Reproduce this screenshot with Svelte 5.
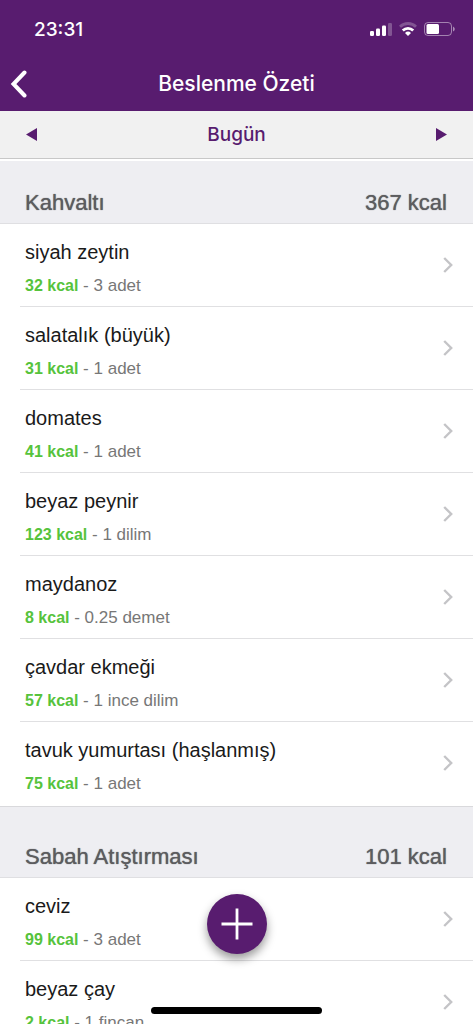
<script lang="ts">
  interface Food {
    name: string;
    kcal: number;
    amount: string;
  }

  interface Meal {
    title: string;
    total: number;
    foods: Food[];
  }

  const meals: Meal[] = [
    {
      title: 'Kahvaltı',
      total: 367,
      foods: [
        { name: 'siyah zeytin', kcal: 32, amount: '3 adet' },
        { name: 'salatalık (büyük)', kcal: 31, amount: '1 adet' },
        { name: 'domates', kcal: 41, amount: '1 adet' },
        { name: 'beyaz peynir', kcal: 123, amount: '1 dilim' },
        { name: 'maydanoz', kcal: 8, amount: '0.25 demet' },
        { name: 'çavdar ekmeği', kcal: 57, amount: '1 ince dilim' },
        { name: 'tavuk yumurtası (haşlanmış)', kcal: 75, amount: '1 adet' }
      ]
    },
    {
      title: 'Sabah Atıştırması',
      total: 101,
      foods: [
        { name: 'ceviz', kcal: 99, amount: '3 adet' },
        { name: 'beyaz çay', kcal: 2, amount: '1 fincan' }
      ]
    }
  ];
</script>

<div class="app">
  <header>
    <div class="status-bar">
      <time>23:31</time>
      <div class="status-icons">
        <svg width="22" height="14" viewBox="0 0 22 14" fill="#fff">
          <rect x="0" y="9" width="4" height="5" rx="1.2" />
          <rect x="6" y="6.5" width="4" height="7.5" rx="1.2" />
          <rect x="12" y="3.5" width="4" height="10.5" rx="1.2" />
          <rect x="18" y="1" width="4" height="13" rx="1.2" opacity="0.25" />
        </svg>
        <svg width="18" height="14" viewBox="0 0 18 14" fill="none" stroke="#fff" stroke-width="2.8">
          <path d="M1 4.8a11.4 11.4 0 0 1 16 0" opacity="0.25" />
          <path d="M3.8 8.6a7.4 7.4 0 0 1 10.4 0" />
          <path d="M9 14 6 11a4.3 4.3 0 0 1 6 0z" fill="#fff" stroke="none" />
        </svg>
        <svg width="31" height="14" viewBox="0 0 31 14">
          <rect x="0.5" y="0.5" width="27" height="13" rx="3.5" fill="none" stroke="#fff" opacity="0.45" />
          <rect x="2.5" y="2" width="12.5" height="10" rx="1.5" fill="#fff" />
          <path d="M29 4.5q1.8 1 1.8 2.5T29 9.5z" fill="#fff" opacity="0.5" />
        </svg>
      </div>
    </div>
    <div class="nav-bar">
      <button class="back" aria-label="Geri">
        <svg width="17" height="28" viewBox="0 0 17 28" fill="none" stroke="#fff" stroke-width="4" stroke-linecap="round">
          <path d="M14.5 2.5 3.5 14l11 11.5" />
        </svg>
      </button>
      <h1>Beslenme Özeti</h1>
    </div>
  </header>

  <div class="date-bar">
    <button aria-label="Önceki gün">
      <svg width="11" height="13" viewBox="0 0 11 13" fill="#581c6f"><path d="M11 0v13L0 6.5z" /></svg>
    </button>
    <span>Bugün</span>
    <button aria-label="Sonraki gün">
      <svg width="11" height="13" viewBox="0 0 11 13" fill="#581c6f"><path d="M0 0v13l11-6.5z" /></svg>
    </button>
  </div>

  <main>
    {#each meals as meal}
      <section>
        <div class="meal-header">
          <h2>{meal.title}</h2>
          <span>{meal.total} kcal</span>
        </div>
        <ul>
          {#each meal.foods as food}
            <li>
              <button class="food">
                <span class="food-text">
                  <span class="name">{food.name}</span>
                  <span class="detail"><b>{food.kcal} kcal</b> - {food.amount}</span>
                </span>
                <svg width="10" height="16" viewBox="0 0 10 16" fill="none" stroke="#c4c4c7" stroke-width="2.4">
                  <path d="M1.2 1 8.2 8l-7 7" />
                </svg>
              </button>
            </li>
          {/each}
        </ul>
      </section>
    {/each}
  </main>

  <button class="add" aria-label="Ekle">
    <svg width="32" height="32" viewBox="0 0 32 32" fill="none" stroke="#fff" stroke-width="2.8">
      <path d="M16 0.5v31M0.5 16h31" />
    </svg>
  </button>
  <div class="home-indicator"></div>
</div>

<style>
  :global(body) {
    margin: 0;
    background: #fff;
  }

  .app {
    display: flex;
    flex-direction: column;
    height: 100vh;
    overflow: hidden;
    font-family: 'Liberation Sans', Arial, sans-serif;
  }

  button {
    margin: 0;
    padding: 0;
    border: none;
    background: none;
    font: inherit;
    color: inherit;
    cursor: pointer;
  }

  svg {
    display: block;
    flex-shrink: 0;
  }

  header {
    background: #581c6f;
    color: #fff;
    font-family: Inter, 'Liberation Sans', sans-serif;
  }

  .status-bar {
    display: flex;
    justify-content: space-between;
    align-items: center;
    height: 58px;
    padding: 0 18px 0 34px;
  }

  .status-bar time {
    font-size: 19px;
    font-weight: 500;
  }

  .status-icons {
    display: flex;
    align-items: center;
    gap: 7px;
  }

  .nav-bar {
    display: grid;
    grid-template-columns: 48px 1fr 48px;
    align-items: center;
    height: 52px;
    padding-bottom: 1px;
  }

  .back {
    padding-left: 10px;
    height: 44px;
  }

  h1 {
    margin: 0;
    font-size: 21px;
    font-weight: 500;
    line-height: 28px;
    text-align: center;
  }

  .date-bar {
    display: flex;
    justify-content: space-between;
    align-items: center;
    height: 47px;
    padding: 0 10px;
    background: #f1f1f1;
    border-bottom: 1px solid #c8c8c8;
    color: #581c6f;
    font-family: Inter, 'Liberation Sans', sans-serif;
    font-size: 19px;
    font-weight: 500;
    line-height: 24px;
  }

  .date-bar button {
    padding: 15px 16px;
  }

  main {
    flex: 1;
    min-height: 0;
    margin-top: 2px;
    overflow-y: auto;
    scrollbar-width: none;
  }

  .meal-header {
    display: flex;
    justify-content: space-between;
    padding: 28px 26px 6px 25px;
    background: #eeeef2;
    border-bottom: 1px solid #dfdfe2;
    color: #5c5c5f;
    font-size: 22px;
    line-height: 28px;
    text-shadow: 0 0 1px #5c5c5f;
  }

  section + section .meal-header {
    padding-top: 36px;
    border-top: 1px solid #d9d9dc;
  }

  h2 {
    margin: 0;
    font: inherit;
  }

  ul {
    margin: 0;
    padding: 0 0 2px;
    list-style: none;
  }

  li {
    margin-left: 20px;
  }

  li + li {
    border-top: 1px solid #e0e0e2;
  }

  .food {
    display: flex;
    justify-content: space-between;
    align-items: center;
    width: 100%;
    height: 82px;
    padding: 0 20px 0 5px;
    text-align: left;
  }

  .food-text {
    display: flex;
    flex-direction: column;
    gap: 10px;
    padding-top: 3px;
  }

  .name {
    color: #1a1a1a;
    font-size: 20px;
    line-height: 28px;
  }

  .detail {
    color: #777;
    font-size: 17px;
    line-height: 20px;
  }

  .detail b {
    color: #56c33c;
    font-size: 16px;
  }

  .add {
    position: fixed;
    bottom: 70px;
    left: 50%;
    display: grid;
    place-items: center;
    width: 60px;
    height: 60px;
    margin-left: -30px;
    border-radius: 50%;
    background: #581c6f;
    box-shadow: 0 5px 10px rgba(0, 0, 0, 0.4);
  }

  .home-indicator {
    position: fixed;
    bottom: 10px;
    left: 32%;
    right: 32%;
    height: 7px;
    border-radius: 4px;
    background: #000;
  }
</style>
